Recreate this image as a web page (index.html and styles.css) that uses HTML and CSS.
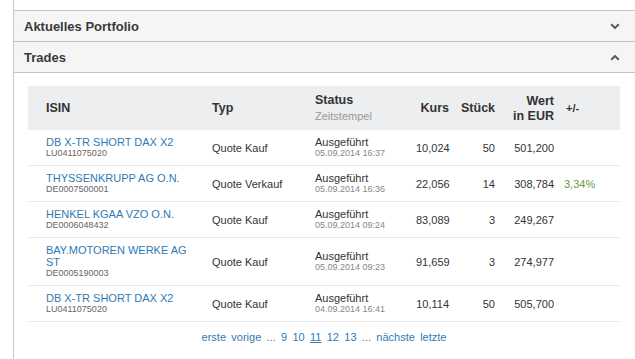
FILE: index.html
```html
<!DOCTYPE html>
<html lang="de">
<head>
<meta charset="utf-8">
<link rel="stylesheet" href="styles.css">
</head>
<body>
<div class="page">
  <div class="panel-head">
    <span class="panel-title">Aktuelles Portfolio</span>
    <svg class="chev" width="10" height="7" viewBox="0 0 10 7"><path d="M1.2 1.3 L5 5 L8.8 1.3" fill="none" stroke="#555" stroke-width="1.9"/></svg>
  </div>
  <div class="panel-head last">
    <span class="panel-title">Trades</span>
    <svg class="chev" width="10" height="7" viewBox="0 0 10 7"><path d="M1.2 5.7 L5 2 L8.8 5.7" fill="none" stroke="#555" stroke-width="1.9"/></svg>
  </div>
  <div class="panel-body">
    <table class="trades">
      <colgroup>
        <col class="c-isin"><col class="c-typ"><col class="c-status"><col class="c-kurs"><col class="c-stk"><col class="c-wert"><col class="c-pm">
      </colgroup>
      <thead>
        <tr>
          <th class="first">ISIN</th>
          <th>Typ</th>
          <th><div>Status</div><div class="sub">Zeitstempel</div></th>
          <th class="num">Kurs</th>
          <th class="num">Stück</th>
          <th class="num two">Wert<br>in EUR</th>
          <th class="pmh">+/-</th>
        </tr>
      </thead>
      <tbody>
        <tr>
          <td class="first"><a class="name">DB X-TR SHORT DAX X2</a><div class="code">LU0411075020</div></td>
          <td>Quote Kauf</td>
          <td><div>Ausgeführt</div><div class="time">05.09.2014 16:37</div></td>
          <td class="num">10,024</td>
          <td class="num">50</td>
          <td class="num">501,200</td>
          <td></td>
        </tr>
        <tr>
          <td class="first"><a class="name">THYSSENKRUPP AG O.N.</a><div class="code">DE0007500001</div></td>
          <td>Quote Verkauf</td>
          <td><div>Ausgeführt</div><div class="time">05.09.2014 16:36</div></td>
          <td class="num">22,056</td>
          <td class="num">14</td>
          <td class="num">308,784</td>
          <td class="pos">3,34%</td>
        </tr>
        <tr>
          <td class="first"><a class="name">HENKEL KGAA VZO O.N.</a><div class="code">DE0006048432</div></td>
          <td>Quote Kauf</td>
          <td><div>Ausgeführt</div><div class="time">05.09.2014 09:24</div></td>
          <td class="num">83,089</td>
          <td class="num">3</td>
          <td class="num">249,267</td>
          <td></td>
        </tr>
        <tr>
          <td class="first"><a class="name">BAY.MOTOREN WERKE AG ST</a><div class="code">DE0005190003</div></td>
          <td>Quote Kauf</td>
          <td><div>Ausgeführt</div><div class="time">05.09.2014 09:23</div></td>
          <td class="num">91,659</td>
          <td class="num">3</td>
          <td class="num">274,977</td>
          <td></td>
        </tr>
        <tr>
          <td class="first"><a class="name">DB X-TR SHORT DAX X2</a><div class="code">LU0411075020</div></td>
          <td>Quote Kauf</td>
          <td><div>Ausgeführt</div><div class="time">04.09.2014 16:41</div></td>
          <td class="num">10,114</td>
          <td class="num">50</td>
          <td class="num">505,700</td>
          <td></td>
        </tr>
      </tbody>
    </table>
    <nav class="pager">
      <a>erste</a><a>vorige</a><span>...</span><a>9</a><a>10</a><a class="cur">11</a><a>12</a><a>13</a><span>...</span><a>nächste</a><a>letzte</a>
    </nav>
  </div>
</div>
</body>
</html>
```
FILE: styles.css
```css
html, body {
  margin: 0;
  padding: 0;
  background: #fff;
}
body {
  font-family: "Liberation Sans", Arial, sans-serif;
  color: #333;
}
.page {
  margin-left: 13px;
  border-left: 1px solid #c9c9c9;
  padding-top: 10px;
  min-height: 349px;
}
.panel-head {
  height: 30px;
  border-top: 1px solid #c4c4c4;
  background: #f5f5f5;
  display: flex;
  align-items: center;
  justify-content: space-between;
  padding: 0 15px 0 10px;
}
.panel-head.last {
  border-bottom: 1px solid #c4c4c4;
}
.panel-title {
  font-size: 13px;
  font-weight: bold;
  color: #3a3a3a;
  line-height: 15px;
  padding-top: 1px;
}
.chev {
  display: block;
}
.panel-body {
  padding: 13px 15px 0 14px;
}
.trades {
  width: 592px;
  table-layout: fixed;
  border-collapse: separate;
  border-spacing: 0;
  font-size: 11px;
}
.c-isin { width: 178px; }
.c-typ { width: 103px; }
.c-status { width: 101px; }
.c-kurs { width: 45px; }
.c-stk { width: 46px; }
.c-wert { width: 59px; }
.c-pm { width: 60px; }
.trades th {
  background: #eceeef;
  height: 43px;
  padding: 0 6px;
  text-align: left;
  font-size: 12.5px;
  font-weight: bold;
  color: #333;
  line-height: 14px;
  vertical-align: middle;
}
.trades th.first, .trades td.first {
  padding-left: 18px;
  padding-right: 12px;
}
.trades th .sub {
  font-size: 11px;
  font-weight: normal;
  color: #999;
  line-height: 14px;
  margin-top: 2px;
}
.trades th.two {
  line-height: 14.5px;
  padding-top: 1px;
}
.trades th.pmh {
  font-size: 11px;
}
.trades .num {
  text-align: right;
}
.trades td {
  padding: 6px 6px;
  border-bottom: 1px solid #e8e8e8;
  vertical-align: middle;
  line-height: 12px;
  color: #333;
}
.name {
  display: block;
  color: #2f7ab5;
  font-size: 11px;
  line-height: 12px;
}
.code {
  font-size: 9px;
  line-height: 11px;
  color: #666;
}
.time {
  font-size: 9px;
  line-height: 11px;
  color: #888;
}
.trades td.pos {
  color: #6a9a3a;
  padding-left: 4px;
}
.pager {
  width: 592px;
  display: flex;
  justify-content: center;
  gap: 5.3px;
  padding-top: 9px;
  font-size: 11px;
  line-height: 13px;
  color: #2f7ab5;
}
.pager .cur {
  text-decoration: underline;
}
```
